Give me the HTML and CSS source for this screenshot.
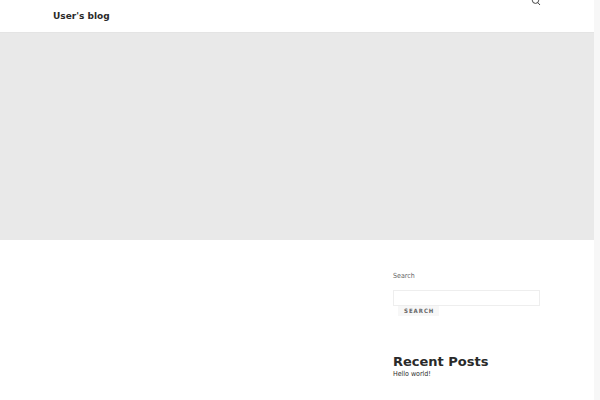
FILE: index.html
```html
<!DOCTYPE html>
<html lang="en">
<head>
    <meta charset="UTF-8">
    <meta name="viewport" content="width=device-width, initial-scale=1.0">
    <title>User's blog</title>
    <link rel="stylesheet" href="styles.css">
</head>
<body>
    <div class="site">
        <header class="site-header">
            <a class="site-title" href="#">User's blog</a>
            <button class="search-toggle" type="button" aria-label="Search">
                <svg viewBox="0 0 10 10" width="10" height="10" fill="none" stroke="#444" stroke-width="1">
                    <circle cx="4.5" cy="4.2" r="3.2"/>
                    <path d="M6.7 6.5L9 9"/>
                </svg>
            </button>
        </header>

        <div class="hero"></div>

        <main class="content">
            <aside class="sidebar">
                <form class="search-form">
                    <label class="search-label" for="search">Search</label>
                    <input class="search-field" id="search" type="search">
                    <button class="search-submit" type="submit">Search</button>
                </form>

                <section class="recent-posts">
                    <h2 class="widget-title">Recent Posts</h2>
                    <ul class="post-list">
                        <li><a href="#">Hello world!</a></li>
                    </ul>
                </section>
            </aside>
        </main>
    </div>
</body>
</html>
```

FILE: styles.css
```css
* {
    box-sizing: border-box;
}

body {
    margin: 0;
    padding-right: 6px;
    background: #f7f7f7;
    color: #2a2a2a;
    font-family: "DejaVu Sans Condensed", "DejaVu Sans", sans-serif;
    font-size: 7px;
    line-height: 12px;
}

a {
    color: inherit;
    text-decoration: none;
}

.site {
    min-height: 100vh;
    background: #fff;
}

/* Header */
.site-header {
    display: flex;
    justify-content: space-between;
    align-items: flex-start;
    height: 32px;
    padding: 0 53px;
}

.site-title {
    padding-top: 10px;
    font-family: "DejaVu Sans", sans-serif;
    font-size: 9px;
    font-weight: bold;
}

.search-toggle {
    display: flex;
    margin-top: -4px;
    padding: 0;
    border: 0;
    background: none;
    cursor: pointer;
}

.hero {
    height: 208px;
    border-top: 1px solid #e4e4e4;
    background: #e9e9e9;
}

/* Sidebar */
.content {
    display: flex;
    justify-content: flex-end;
    padding: 30px 54px 20px;
}

.sidebar {
    width: 30%;
    min-width: 147px;
}

.search-form {
    display: flex;
    flex-direction: column;
    align-items: flex-start;
}

.search-label {
    margin-bottom: 8px;
    color: #666;
}

.search-field {
    width: 100%;
    height: 16px;
    padding: 0 4px;
    border: 1px solid #eee;
    background: #fff;
    font: inherit;
}

.search-submit {
    margin-left: 5px;
    padding: 0 5px 0 6px;
    border: 0;
    background: #f7f7f7;
    color: #666;
    font: inherit;
    font-size: 6px;
    font-weight: bold;
    line-height: 10px;
    letter-spacing: 1px;
    text-transform: uppercase;
    cursor: pointer;
}

.recent-posts {
    margin-top: 40px;
}

.widget-title {
    margin: 0;
    font-family: "DejaVu Sans", sans-serif;
    font-size: 13px;
    line-height: 12px;
}

.post-list {
    margin: 0;
    padding: 0;
    list-style: none;
}
```
